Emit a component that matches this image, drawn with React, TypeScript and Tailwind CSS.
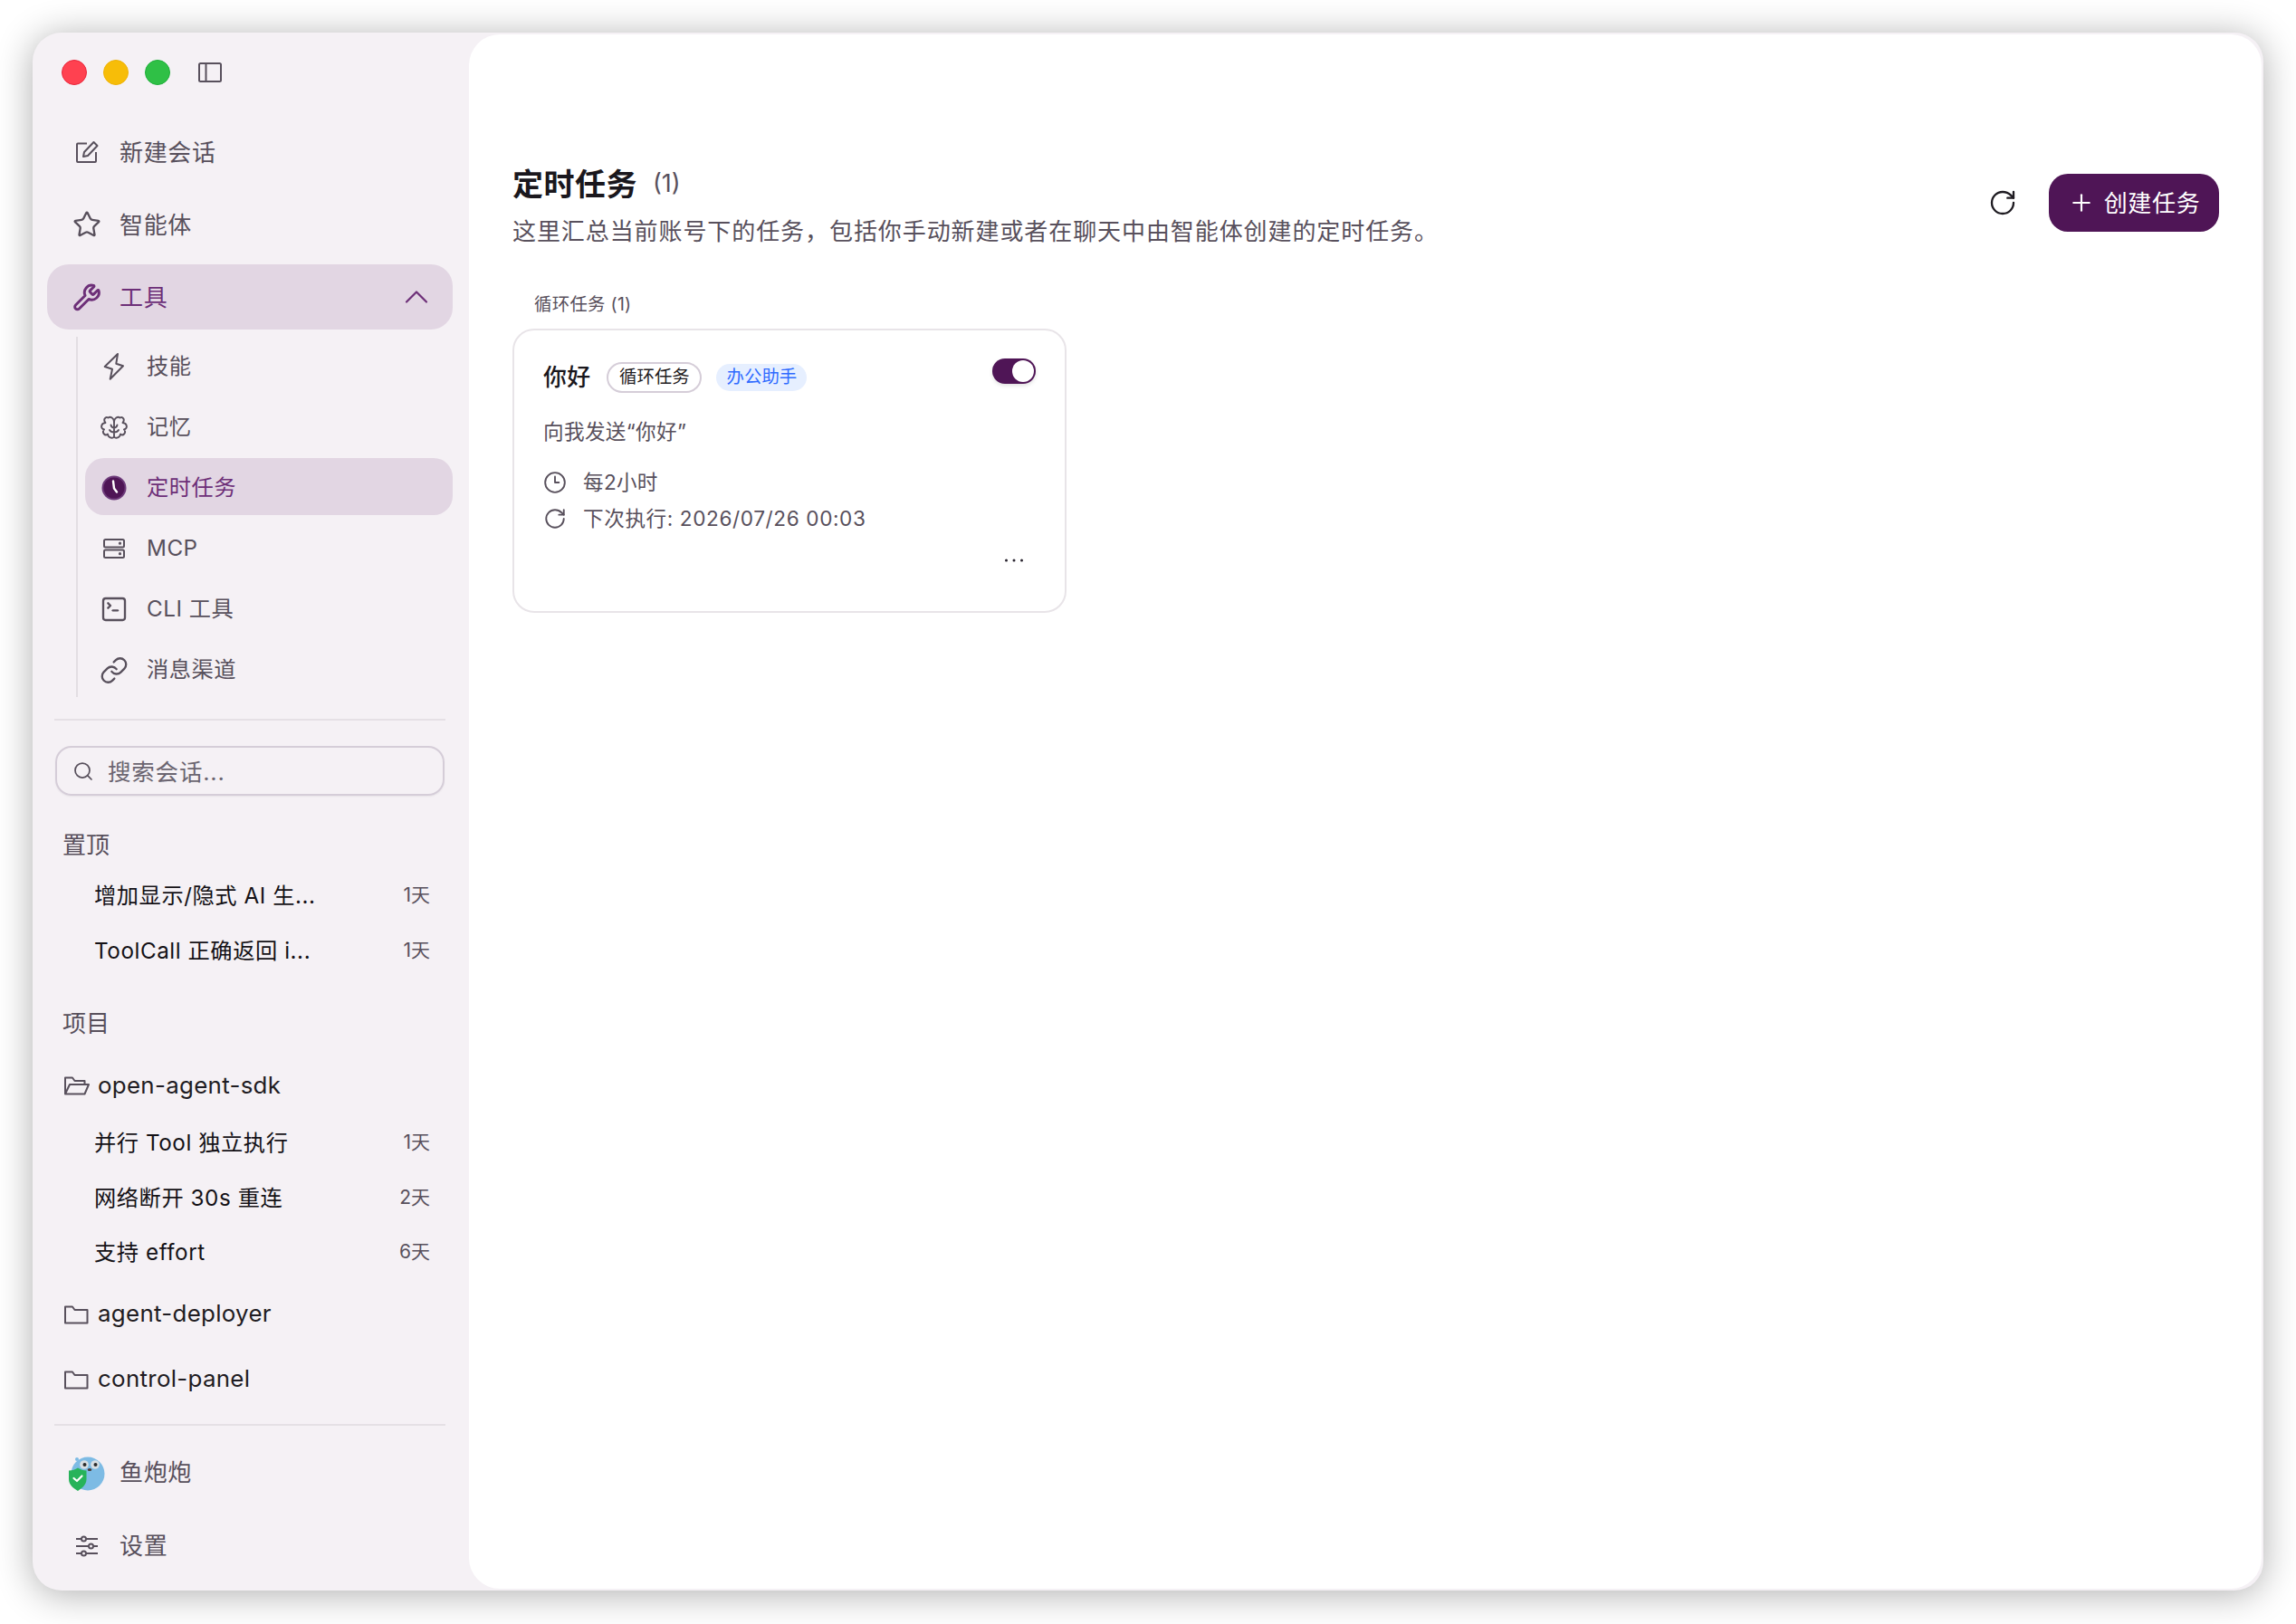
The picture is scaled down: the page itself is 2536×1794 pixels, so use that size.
import React from "react";
import { Star, Wrench, ChevronUp, SquareTerminal, Link, Search, RotateCw, Plus, Clock3 } from "lucide-react";

function SidebarToggle() {
  return (
    <svg width="26" height="22" viewBox="0 0 26 22" fill="none" stroke="#58505c" strokeWidth="2">
      <rect x="1" y="1" width="24" height="20" rx="1.5" />
      <path d="M8.5 1v20" />
    </svg>
  );
}

function PenIcon() {
  return (
    <svg width="26" height="26" viewBox="0 0 26 26" fill="none" stroke="#58505c" strokeWidth="2" strokeLinejoin="round">
      <path d="M13 3.500H3a1 1 0 0 0-1 1V23a1 1 0 0 0 1 1h19a1 1 0 0 0 1-1V13" />
      <path d="M20.500 2 24.500 6 14 17l-5 1 1-5z" />
    </svg>
  );
}

function BoltIcon() {
  return (
    <svg width="24" height="32" viewBox="0 0 24 32" fill="none" stroke="#58505c" strokeWidth="2" strokeLinejoin="round">
      <path d="M16 2 1.700 16 10 18.700 7.700 29.700 22 15.300 14.300 12.700z" />
    </svg>
  );
}

function BrainIcon() {
  return (
    <svg width="30" height="26" viewBox="0 0 30 26" fill="none" stroke="#58505c" strokeWidth="1.900" strokeLinecap="round" strokeLinejoin="round">
      <path d="M15 7C15 3 11 .5 8.500 2.500 5.500 1 2.500 4.500 5.500 8 .5 8.500-.5 14 4 15.500 1 19 5 23 8 20.500c.5 4 5 5.500 7 3" />
      <path d="M15 7c0-4 4-6.500 6.500-4.500C24.500 1 27.500 4.500 24.500 8c5 .5 6 6 1.500 7.500 3 3.500-1 7.500-4 5-.5 4-5 5.500-7 3" />
      <path d="M15 7v16.500M15 13.500c-1.500 0-3-1-3.500-3M15 18.500c-2 0-4-.5-5-2.500M15 13.500c1.500 0 3-1 3.500-3M15 18.500c2 0 4-.5 5-2.500" />
    </svg>
  );
}

function ServerIcon() {
  return (
    <svg width="26" height="24" viewBox="0 0 26 24" fill="none" stroke="#58505c" strokeWidth="2">
      <rect x="2" y="2" width="22" height="8.500" rx="1.500" />
      <rect x="2" y="13.500" width="22" height="8.500" rx="1.500" />
      <circle cx="19.500" cy="6.200" r="0.600" fill="#58505c" />
      <circle cx="19.500" cy="17.700" r="0.600" fill="#58505c" />
    </svg>
  );
}

function ActiveClock() {
  return (
    <svg width="28" height="28" viewBox="0 0 28 28">
      <circle cx="14" cy="14" r="13.500" fill="#6d3a7a" />
      <circle cx="14" cy="14" r="11.500" fill="#4f1556" />
      <path d="M13 6.500 14 14.500 17 18.500" stroke="#fff" strokeWidth="2.400" fill="none" strokeLinecap="round" strokeLinejoin="round" />
    </svg>
  );
}

function FolderIcon() {
  return (
    <svg width="28" height="24" viewBox="0 0 28 24" fill="none" stroke="#58505c" strokeWidth="2">
      <path d="M2 21.500V3.500h8l2.500 3.500h14v14.500z" strokeLinejoin="round" />
    </svg>
  );
}

function FolderOpenIcon() {
  return (
    <svg width="30" height="24" viewBox="0 0 30 24" fill="none" stroke="#58505c" strokeWidth="2">
      <path d="M2 21.500V3.500h8l2.500 3.500h11v4" strokeLinejoin="round" />
      <path d="M2 21.500 7 11h21l-4.500 10.500z" strokeLinejoin="round" />
    </svg>
  );
}

function SlidersIcon() {
  return (
    <svg width="24" height="24" viewBox="0 0 24 24" fill="none" stroke="#58505c" strokeWidth="2">
      <path d="M0 4h6M11 4h13M0 12h14M19 12h5M0 20h6M11 20h13" />
      <circle cx="8.500" cy="4" r="2.500" />
      <circle cx="16.500" cy="12" r="2.500" />
      <circle cx="8.500" cy="20" r="2.500" />
    </svg>
  );
}

function Avatar() {
  return (
    <svg width="40" height="40" viewBox="0 0 40 40">
      <circle cx="21" cy="21" r="18.500" fill="#7dbbe4" />
      <circle cx="9" cy="5" r="2" fill="#7dbbe4" />
      <circle cx="17" cy="11" r="4.800" fill="#d8dfe3" />
      <circle cx="29" cy="11" r="4.800" fill="#d8dfe3" />
      <circle cx="17.500" cy="11" r="2" fill="#2b2b2b" />
      <circle cx="29.500" cy="11" r="2" fill="#2b2b2b" />
      <ellipse cx="23" cy="16.500" rx="2.300" ry="1.600" fill="#4a3a35" />
      <path d="M0 17.500c4 0 7-1 10-3 3 2 6 3 9.500 3v9.500c0 6-5 10-9.500 13C5 37 0 33 0 27z" fill="#27b35a" />
      <path d="M5.500 26l3.500 3 5.500-5.500" fill="none" stroke="#fff" strokeWidth="2.200" strokeLinecap="round" strokeLinejoin="round" />
    </svg>
  );
}

function DotsIcon() {
  return (
    <svg width="20" height="4" viewBox="0 0 20 4" fill="#2a2530">
      <circle cx="1.500" cy="2" r="1.500" />
      <circle cx="10" cy="2" r="1.500" />
      <circle cx="18.500" cy="2" r="1.500" />
    </svg>
  );
}

function NavRow({ icon, label }: { icon: React.ReactNode; label: string }) {
  return (
    <div className="flex h-[72px] items-center gap-5 pl-7 text-[26px] tracking-[0.65px] text-[#58505c]">
      <span className="flex h-8 w-8 items-center justify-center">{icon}</span>
      {label}
    </div>
  );
}

function SubRow({ icon, label, active }: { icon: React.ReactNode; label: string; active?: boolean }) {
  return (
    <div
      className={
        active
          ? "flex h-[63px] items-center gap-5 rounded-[21px] bg-[#e2d6e3] pl-4 pt-[3px] text-[24.250px] tracking-[0.5px] text-[#6d2f78]"
          : "flex h-[63px] items-center gap-5 pl-4 pt-[3px] text-[24.250px] tracking-[0.5px] text-[#58505c]"
      }
    >
      <span className="flex h-8 w-8 items-center justify-center">{icon}</span>
      {label}
    </div>
  );
}

function ChatRow({ title, age }: { title: string; age: string }) {
  return (
    <div className="flex h-[60.500px] items-center justify-between pl-11 pr-[43px]">
      <span className="text-[24.250px] tracking-[0.55px] text-[#141116]">{title}</span>
      <span className="-mt-[3px] text-[21px] text-[#58505c]">{age}</span>
    </div>
  );
}

function ProjectRow({ icon, name, short }: { icon: React.ReactNode; name: string; short?: boolean }) {
  return (
    <div
      className={
        short
          ? "flex h-[68px] items-center pl-[10px] text-[25.900px] tracking-[0.3px] text-[#1f1c22]"
          : "flex h-[72px] items-center pl-[10px] text-[25.900px] tracking-[0.3px] text-[#1f1c22]"
      }
    >
      <span className="flex w-[38px] shrink-0 items-center">{icon}</span>
      {name}
    </div>
  );
}

const ic = { size: 32, strokeWidth: 1.75, color: "#58505c" };
const sm = { size: 26, strokeWidth: 1.75, color: "#58505c" };

export default function App() {
  return (
    <div className="h-[1794px] w-[2536px] overflow-hidden bg-white pb-[37px] pl-9 pr-[36px] pt-9 font-[Inter,'Noto_Sans_CJK_SC',sans-serif]">
      <div className="flex h-full overflow-hidden rounded-[32px] bg-[#f5f1f5] shadow-[0_4px_40px_rgba(0,0,0,0.32)]">
        <aside className="flex w-[482px] shrink-0 flex-col">
          <div className="flex h-24 items-start gap-[18px] pl-8 pt-[30px]">
            <div className="h-7 w-7 rounded-full border border-[#e8283c] bg-[#ff4150]" />
            <div className="h-7 w-7 rounded-full border border-[#eeb208] bg-[#f7bd08]" />
            <div className="h-7 w-7 rounded-full border border-[#1faf3a] bg-[#2fc046]" />
            <div className="ml-[13px] mt-[3px]">
              <SidebarToggle />
            </div>
          </div>

          <div className="flex flex-col gap-2 pl-4 pr-[18px]">
            <NavRow icon={<PenIcon />} label="新建会话" />
            <NavRow icon={<Star {...ic} />} label="智能体" />
            <div className="flex h-[72px] items-center gap-5 rounded-[24px] bg-[#e2d6e3] pl-7 text-[26px] tracking-[0.65px] text-[#6d2f78]">
              <span className="flex h-8 w-8 items-center justify-center">
                <Wrench size={33} strokeWidth={2.2} color="#6d2f78" />
              </span>
              工具
              <ChevronUp size={44} strokeWidth={1.2} color="#6d2f78" className="ml-auto mr-[18px]" />
            </div>
          </div>

          <div className="ml-[48px] mr-[18px] mt-2 flex flex-col gap-1 border-l-2 border-[#e3dee3] pl-2">
            <SubRow icon={<BoltIcon />} label="技能" />
            <SubRow icon={<BrainIcon />} label="记忆" />
            <SubRow icon={<ActiveClock />} label="定时任务" active />
            <SubRow icon={<ServerIcon />} label="MCP" />
            <SubRow icon={<SquareTerminal {...ic} size={34} />} label="CLI 工具" />
            <SubRow icon={<Link {...ic} size={33} />} label="消息渠道" />
          </div>

          <div className="ml-6 mr-[26px] mt-6 h-0.5 shrink-0 bg-[#e5e0e5]" />

          <div className="ml-[25px] mr-[27px] mt-7 flex h-[55px] shrink-0 items-center gap-[15px] rounded-[18px] border-2 border-[#d5cdd8] pl-[17px] pt-1 text-[25.500px] tracking-[0.8px] text-[#6b6570] shadow-[0_1px_2px_rgba(0,0,0,0.06)]">
            <Search size={24} strokeWidth={1.75} color="#58505c" className="-mt-1" />
            搜索会话...
          </div>

          <div className="ml-[33px] mt-[34px] flex h-10 items-center text-[26px] text-[#58505c]">置顶</div>
          <div className="ml-6 mt-[7px] flex flex-col">
            <ChatRow title="增加显示/隐式 AI 生..." age="1天" />
            <ChatRow title="ToolCall 正确返回 i..." age="1天" />
          </div>

          <div className="ml-[33px] mt-[29px] flex h-10 items-center text-[26px] text-[#58505c]">项目</div>
          <div className="ml-6 mt-[15px] flex flex-col">
            <ProjectRow icon={<FolderOpenIcon />} name="open-agent-sdk" short />
            <ChatRow title="并行 Tool 独立执行" age="1天" />
            <ChatRow title="网络断开 30s 重连" age="2天" />
            <ChatRow title="支持 effort" age="6天" />
            <div className="mt-px">
              <ProjectRow icon={<FolderIcon />} name="agent-deployer" />
            </div>
            <ProjectRow icon={<FolderIcon />} name="control-panel" />
          </div>

          <div className="ml-6 mr-[26px] mt-[13px] h-0.5 shrink-0 bg-[#e5e0e5]" />

          <div className="mt-4 flex flex-col gap-[9px] pl-4 pr-[18px]">
            <div className="flex h-[72px] items-center gap-4 pl-[24px] text-[26px] tracking-[0.65px] text-[#58505c]">
              <Avatar />
              鱼炮炮
            </div>
            <NavRow icon={<SlidersIcon />} label="设置" />
          </div>
        </aside>

        <main className="my-0.5 mr-0.5 flex flex-1 flex-col rounded-[34px] bg-white pl-[48px] pr-[47px] pt-[145px]">
          <div className="flex items-start justify-between">
            <div className="flex flex-col gap-3">
              <div className="flex h-10 items-center gap-[17px]">
                <span className="text-[34px] font-semibold tracking-[0.5px] text-[#1a171d]">定时任务</span>
                <span className="text-[27px] text-[#58505c]">(1)</span>
              </div>
              <div className="flex h-10 items-center text-[26px] tracking-[0.92px] text-[#58505c]">
                这里汇总当前账号下的任务，包括你手动新建或者在聊天中由智能体创建的定时任务。
              </div>
            </div>
            <div className="mt-[9px] flex items-center gap-[35px]">
              <RotateCw size={32} strokeWidth={1.75} color="#1f1c22" />
              <div className="flex h-16 w-[188px] items-center justify-center gap-[10px] rounded-[21px] bg-[#4f1556] text-[26px] tracking-[0.65px] text-white">
                <Plus size={30} strokeWidth={1.75} color="#fff" />
                创建任务
              </div>
            </div>
          </div>

          <div className="mt-[47px] flex h-[30px] items-center pl-6 text-[19.400px] tracking-[0.3px] text-[#58505c]">循环任务 (1)</div>

          <div className="mt-[11px] h-[314px] w-[612px] rounded-[24px] border-2 border-[#e8e4e8] pl-8 pr-8 pt-[35px]">
            <div className="flex h-[34px] items-center">
              <span className="text-[25.900px] font-medium tracking-[0.3px] text-[#1a171d]">你好</span>
              <span className="ml-[18px] flex h-[34px] w-[105px] items-center justify-center rounded-full border-2 border-[#d5cdd8] text-[19.400px] text-[#1f1c22]">
                循环任务
              </span>
              <span className="ml-4 flex h-[30px] w-[100px] items-center justify-center rounded-full bg-[#e6efff] text-[19.400px] text-[#2f6bff]">
                办公助手
              </span>
              <span className="-mt-[14px] ml-auto flex h-7 w-12 items-center justify-end rounded-full bg-[#4f1556] pr-0.5 shadow-[0_2px_4px_rgba(0,0,0,0.12)]">
                <span className="h-6 w-6 rounded-full bg-white" />
              </span>
            </div>
            <div className="mt-[25px] flex h-9 items-center text-[22.600px] tracking-[0.35px] text-[#58505c]">向我发送“你好”</div>
            <div className="mt-5 flex h-9 items-center gap-[18px] text-[22.600px] tracking-[0.3px] text-[#58505c]">
              <Clock3 {...sm} />
              每2小时
            </div>
            <div className="mt-1 flex h-9 items-center gap-[18px] text-[22.600px] tracking-[0.6px] text-[#58505c]">
              <RotateCw {...sm} />
              下次执行: 2026/07/26 00:03
            </div>
            <div className="mt-[26px] flex justify-end pr-[14px]">
              <DotsIcon />
            </div>
          </div>
        </main>
      </div>
    </div>
  );
}
